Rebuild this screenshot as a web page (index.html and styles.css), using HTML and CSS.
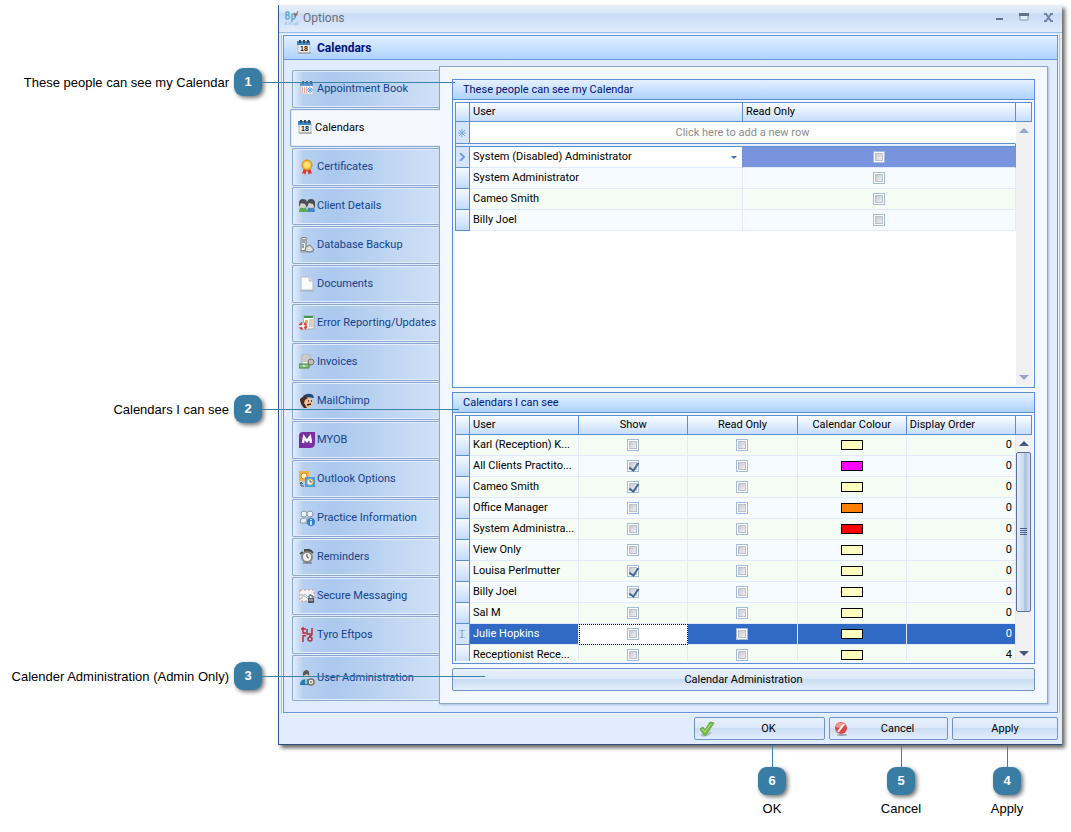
FILE: index.html
```html
<!DOCTYPE html>
<html lang="en">
<head>
<meta charset="UTF-8" />
<meta name="viewport" content="width=device-width, initial-scale=1.0" />
<title>Options - Calendars</title>
<link rel="stylesheet" href="styles.css">
</head>
<body>
<div class="page">
  <aside class="notes">
    <div class="note note-1"><span>These people can see my Calendar</span><b class="badge">1</b></div>
    <div class="note note-2"><span>Calendars I can see</span><b class="badge">2</b></div>
    <div class="note note-3"><span>Calender Administration (Admin Only)</span><b class="badge">3</b></div>
  </aside>

  <div class="window">
    <div class="titlebar">
      <svg class="logo" viewBox="0 0 16 16">
        <path d="M2 2v7M2 2h2q2 1 0 3H2M4 5q3 2 0 4H2M8 4v8M8 4h2q3 2 0 5H8" fill="none" stroke="#62abd8" stroke-width="1.500"/>
        <path d="M10 3l2 1 2-3-1 4-2 2z" fill="#8f6d63" stroke="#8f6d63" stroke-width=".5"/>
        <path d="M1 15l1-3 1 3M5 12v3M7 12v3M9 13v2M11 13h2v2h-2zM14 11v4" fill="none" stroke="#9dcbe9"/>
      </svg>
      <span class="title">Options</span>
      <button class="win-btn" aria-label="Minimize"><svg viewBox="0 0 10 10"><path d="M2 5h7v2H2z" fill="#65728a"/></svg></button>
      <button class="win-btn" aria-label="Maximize"><svg viewBox="0 0 10 10"><path d="M1 1h8v6H1z" fill="#e5effb" stroke="#8296b8"/><path d="M0 0h10v3H0z" fill="#65728a"/></svg></button>
      <button class="win-btn" aria-label="Close"><svg viewBox="0 0 10 10"><path d="M0 1h3M6 1h3M0 8h3M6 8h3M2 1l5 7M7 1L2 8" fill="none" stroke="#7486a6" stroke-width="2"/></svg></button>
    </div>

    <div class="frame">
      <div class="frame-title"><svg class="icon" viewBox="0 0 16 16"><path d="M2 3h12v10H2z" fill="#f2f2ef" stroke="#bcbcbc"/><path d="M1 1h13v4H1z" fill="#3e86c4"/><path d="M3 0h2v3H3zM7 0h2v3H7zM11 0h2v3h-2z" fill="#3a4654"/><path d="M2 13h13" stroke="#8e8e8e"/><text x="8" y="11" font-size="7" font-weight="bold" text-anchor="middle" fill="#222">18</text></svg>Calendars</div>
      <div class="frame-body">
        <nav class="tabs">
          <button class="tab"><svg class="icon" viewBox="0 0 16 16"><path d="M2 3h12v10H2z" fill="#f5f7fb" stroke="#c0c4cc"/><path d="M1 1h13v4H1z" fill="#5b98cf"/><path d="M3 0h2v3H3zM7 0h2v3H7zM11 0h2v3h-2z" fill="#5a6a7c"/><path d="M3 7h6M3 9h6M3 11h6" stroke="#e0574f" stroke-dasharray="1 1"/><path d="M11 6v6M8 9h6M9 7l4 4M13 7l-4 4" stroke="#5aaaf0"/></svg>Appointment Book</button>
          <button class="tab active"><svg class="icon" viewBox="0 0 16 16"><path d="M2 3h12v10H2z" fill="#f2f2ef" stroke="#bcbcbc"/><path d="M1 1h13v4H1z" fill="#3e86c4"/><path d="M3 0h2v3H3zM7 0h2v3H7zM11 0h2v3h-2z" fill="#3a4654"/><path d="M2 13h13" stroke="#8e8e8e"/><text x="8" y="11" font-size="7" font-weight="bold" text-anchor="middle" fill="#222">18</text></svg>Calendars</button>
          <button class="tab"><svg class="icon" viewBox="0 0 16 16"><path d="M5 9l-2 6 2-1 1 2 2-5 2 5 1-2 2 1-2-6z" fill="#e0322c"/><circle cx="8" cy="6" r="5" fill="#f6c33c" stroke="#d58a18"/><circle cx="8" cy="6" r="3" fill="#ffe27a"/></svg>Certificates</button>
          <button class="tab"><svg class="icon" viewBox="0 0 16 16"><path d="M0 14q0-5 4-5t4 5z" fill="#5faa55"/><path d="M8 14q0-5 4-5t4 5z" fill="#4689c4"/><circle cx="4" cy="7" r="3" fill="#d6d2ca"/><circle cx="12" cy="7" r="3" fill="#d6d2ca"/><path d="M0 9V5q0-4 4-4t4 4v5l-2-4-4-1zM8 9V5q0-4 4-4t4 4v6l-2-5-4-1z" fill="#4b4f55"/></svg>Client Details</button>
          <button class="tab"><svg class="icon" viewBox="0 0 16 16"><path d="M2 1l5-1v13l-5 1z" fill="#ececea" stroke="#74787c"/><path d="M3 3h3M3 5h3M3 8h2M3 10h2" stroke="#55595f"/><path d="M7 10l4-2 4 5-4 2-5-1z" fill="#dededc" stroke="#74787c"/><path d="M1 15h14" stroke="#92969a"/></svg>Database Backup</button>
          <button class="tab"><svg class="icon" viewBox="0 0 16 16"><path d="M2 1h8l4 4v9H2z" fill="#fafafa" stroke="#b8bcc2"/><path d="M10 1v4h4" fill="#e0e0e0" stroke="#b8bcc2"/><path d="M1 15h14" stroke="#a9adb3"/></svg>Documents</button>
          <button class="tab"><svg class="icon" viewBox="0 0 16 16"><path d="M4 1h11v13H5z" fill="#fafafa" stroke="#aaa"/><path d="M5 2h9" stroke="#3a9a4a" stroke-width="2"/><path d="M6 5h3v3H6z" fill="#f0b347"/><path d="M10 5h4M10 7h4M10 9h4M10 11h4" stroke="#b0a890"/><circle cx="4" cy="11" r="3" fill="#fff" stroke="#dc4038" stroke-width="2.500" stroke-dasharray="3 2"/></svg>Error Reporting/Updates</button>
          <button class="tab"><svg class="icon" viewBox="0 0 16 16"><path d="M3 1h8v11H3z" fill="#f2f2f0" stroke="#a8a8a8"/><path d="M4 3h6M4 5h6M4 7h6" stroke="#a0a0a0"/><circle cx="12" cy="8" r="3" fill="#c5b9ae" stroke="#77706c"/><path d="M0 10h10v4H0z" fill="#8cc084" stroke="#3e8440"/><circle cx="5" cy="12" r="1" fill="#eaf5e4"/></svg>Invoices</button>
          <button class="tab"><svg class="icon" viewBox="0 0 16 16"><path d="M3 5q4-4 10 1l1 5q-2 4-7 4-4-2-4-10z" fill="#f0c39a"/><path d="M1 6l5-4 3 3-3 2-1 3 3 5-3 0q-4-4-4-9z" fill="#4a2d21"/><path d="M4 3q5-4 10-1l1 3-8-1z" fill="#24486d"/><path d="M9 8h1M12 8h1M8 12l4-1" stroke="#331d16" stroke-width="1.500"/></svg>MailChimp</button>
          <button class="tab"><svg class="icon" viewBox="0 0 16 16"><path d="M0 4q0-4 4-4h12v11q0 5-5 5H0z" fill="#7c2f9e"/><path d="M4 11l1-6 3 4 3-4 1 6" fill="none" stroke="#fff" stroke-width="2.500"/></svg>MYOB</button>
          <button class="tab"><svg class="icon" viewBox="0 0 16 16"><path d="M0 0h10v10H0z" fill="#f2ae3e"/><circle cx="5" cy="5" r="3" fill="#fff3cf" stroke="#d98c1b"/><path d="M6 6h10v10H6z" fill="#4b9ee0"/><circle cx="11" cy="11" r="3" fill="#f8fbff" stroke="#e2b84d"/><path d="M11 9v2h2" stroke="#456" fill="none"/><path d="M2 12v3h3M1 13l1-2 2 2" stroke="#456" fill="none"/></svg>Outlook Options</button>
          <button class="tab"><svg class="icon" viewBox="0 0 16 16"><circle cx="5" cy="4" r="3" fill="#edf2f7" stroke="#8798a8"/><circle cx="11" cy="4" r="3" fill="#edf2f7" stroke="#8798a8"/><path d="M1 13q0-5 4-5t4 5zM7 13q0-5 4-5t3 5z" fill="#e8edf2" stroke="#8798a8"/><circle cx="12" cy="12" r="4" fill="#337fd0"/><path d="M12 9v1M12 11v4" stroke="#fff" stroke-width="1.500"/></svg>Practice Information</button>
          <button class="tab"><svg class="icon" viewBox="0 0 16 16"><path d="M1 5l3-2M11 1l3 3M6 1h4v2H6z" stroke="#4d4b49" stroke-width="2"/><circle cx="8" cy="8" r="5" fill="#f1f1ef" stroke="#888785" stroke-width="2"/><path d="M8 5v3l2 1" fill="none" stroke="#444"/><path d="M4 14h9" stroke="#666"/></svg>Reminders</button>
          <button class="tab"><svg class="icon" viewBox="0 0 16 16"><path d="M1 2h14v11H1z" fill="#f5f5f5"/><path d="M1 2h14v11H1z" fill="none" stroke="#e28b83" stroke-dasharray="2 2"/><path d="M2 11l4-5 3 3 2-3 3 5M3 11V6l6 5" fill="none" stroke="#a9bacb"/><path d="M9 10h6v5H9z" fill="#53585e"/><path d="M10 10V8q2-2 4 0v2" fill="none" stroke="#53585e"/><path d="M10 12h4" stroke="#ddd"/></svg>Secure Messaging</button>
          <button class="tab"><svg class="icon" viewBox="0 0 16 16"><path d="M4 0v6h3M2 2h5" fill="none" stroke="#d8202c" stroke-width="1.500"/><path d="M8 2v5h5M13 1v6q0 2-3 2" fill="none" stroke="#a8373f" stroke-width="1.500"/><path d="M4 15V9q1-1 3 0" fill="none" stroke="#d8202c" stroke-width="1.500"/><circle cx="11" cy="12" r="2" fill="none" stroke="#a8373f" stroke-width="1.500"/></svg>Tyro Eftpos</button>
          <button class="tab tall"><svg class="icon" viewBox="0 0 16 16"><path d="M1 15q0-6 6-6t6 6z" fill="#287eaa"/><circle cx="7" cy="5" r="3" fill="#e0d5c4"/><path d="M4 6V3q1-3 4-3 3 1 2 6l-2-2z" fill="#54585a"/><path d="M7 9v5" stroke="#fff"/><circle cx="12" cy="12" r="3" fill="#f5f1e5" stroke="#77736c" stroke-width="1.500"/><circle cx="12" cy="12" r="1" fill="#77736c"/></svg>User Administration</button>
        </nav>

        <main class="panel">
          <section class="group">
            <h2>These people can see my Calendar</h2>
            <div class="grid grid-top">
              <div class="rows">
                <table>
                  <colgroup><col class="ind-col"><col><col></colgroup>
                  <thead><tr><th></th><th>User</th><th>Read Only</th></tr></thead>
                  <tbody>
                    <tr class="new-row"><td class="ind"><svg viewBox="0 0 8 8"><path d="M4 0v8M0 4h8M1 1l6 6M7 1L1 7" stroke="#7fa8e4"/></svg></td><td colspan="2">Click here to add a new row</td></tr>
                    <tr class="split"><td colspan="3"></td></tr>
                    <tr class="current">
                      <td class="ind"><svg viewBox="0 0 8 8"><path d="M2 0l4 4-4 4" fill="none" stroke="#6f9fe2" stroke-width="2"/></svg></td>
                      <td class="combo"><select aria-label="User"><option>System (Disabled) Administrator</option><option>System Administrator</option></select></td>
                      <td class="mid"><input type="checkbox" aria-label="Read only"></td>
                    </tr>
                    <tr class="blue"><td class="ind"></td><td>System Administrator</td><td class="mid"><input type="checkbox" aria-label="Read only"></td></tr>
                    <tr><td class="ind"></td><td>Cameo Smith</td><td class="mid"><input type="checkbox" aria-label="Read only"></td></tr>
                    <tr class="blue"><td class="ind"></td><td>Billy Joel</td><td class="mid"><input type="checkbox" aria-label="Read only"></td></tr>
                  </tbody>
                </table>
              </div>
              <div class="scroll off"><i class="corner"></i><i class="up"></i><i class="track"></i><i class="down"></i></div>
            </div>
          </section>

          <section class="group">
            <h2>Calendars I can see</h2>
            <div class="grid grid-bottom">
              <div class="rows">
                <table>
                  <colgroup><col class="ind-col"><col><col><col><col><col></colgroup>
                  <thead><tr><th></th><th>User</th><th class="mid">Show</th><th class="mid">Read Only</th><th class="mid">Calendar Colour</th><th>Display Order</th></tr></thead>
                  <tbody id="calendarRows"></tbody>
                </table>
              </div>
              <div class="scroll"><i class="corner"></i><i class="up"></i><i class="track"><i class="thumb"></i></i><i class="down"></i></div>
            </div>
          </section>

          <button class="btn">Calendar Administration</button>
        </main>
      </div>
    </div>

    <div class="actions">
      <button class="btn ok"><svg class="icon" viewBox="0 0 16 16"><path d="M2 14q6 2 10-3" stroke="#aab8c4" stroke-width="2" fill="none"/><path d="M1 8l3-2 2 3 5-8 4 1-8 12H5z" fill="#79bd45" stroke="#69a948"/><path d="M3 8l3 3 6-8" fill="none" stroke="#b5e089"/></svg><span>OK</span></button>
      <button class="btn cancel"><svg class="icon" viewBox="0 0 16 16"><ellipse cx="8" cy="14" rx="5" ry="1" fill="#9ca6b2"/><circle cx="7" cy="7" r="6" fill="#dd4842"/><path d="M2 4q5-5 10 0-5 4-10 2z" fill="#f09a93"/><path d="M4 11l6-8" stroke="#fff" stroke-width="2"/></svg><span>Cancel</span></button>
      <button class="btn apply">Apply</button>
    </div>
  </div>
</div>

<div class="bottom-notes">
  <div class="note-down"><b class="badge">6</b><span>OK</span></div>
  <div class="note-down"><b class="badge">5</b><span>Cancel</span></div>
  <div class="note-down"><b class="badge">4</b><span>Apply</span></div>
</div>

<script>
  // name, show, colour, display order
  const calendars = [
    ['Karl (Reception) K...', false, 'cream', 0],
    ['All Clients Practito...', true, 'magenta', 0],
    ['Cameo Smith', true, 'cream', 0],
    ['Office Manager', false, 'orange', 0],
    ['System Administra...', false, 'red', 0],
    ['View Only', false, 'cream', 0],
    ['Louisa Perlmutter', true, 'cream', 0],
    ['Billy Joel', true, 'cream', 0],
    ['Sal M', false, 'cream', 0],
    ['Julie Hopkins', false, 'cream', 0],
    ['Receptionist Rece...', false, 'cream', 4]
  ];
  const cursor = '<svg viewBox="0 0 8 8"><path d="M1 0h2l1 1 1-1h2M4 1v6M1 8h2l1-1 1 1h2" fill="none" stroke="#6f9fe2"/></svg>';
  const body = document.getElementById('calendarRows');

  calendars.forEach(function(c, i) {
    const row = document.createElement('tr');
    const selected = c[0] === 'Julie Hopkins';
    if (selected) {
      row.className = 'selected';
    } else if (i % 2) {
      row.className = 'blue';
    }
    row.innerHTML =
      '<td class="ind">' + (selected ? cursor : '') + '</td>' +
      '<td>' + c[0] + '</td>' +
      '<td class="mid' + (selected ? ' focus' : '') + '"><input type="checkbox" aria-label="Show"' + (c[1] ? ' checked' : '') + '></td>' +
      '<td class="mid"><input type="checkbox" aria-label="Read only"></td>' +
      '<td class="mid"><span class="swatch ' + c[2] + '"></span></td>' +
      '<td class="num">' + c[3] + '</td>';
    body.appendChild(row);
  });
</script>
</body>
</html>
```
FILE: styles.css
```css
* {
  box-sizing: border-box;
}
body {
  margin: 0;
  background: #fff;
  color: #000;
  font: 11px/14px Roboto, Tahoma, sans-serif;
}
button, select, input {
  font: inherit;
  color: inherit;
  margin: 0;
}
svg {
  display: block;
}
.icon {
  width: 16px;
  height: 16px;
  flex: none;
}

/* numbered notes */
.page {
  display: flex;
  padding: 5px 9px 0 0;
}
.notes {
  flex: none;
  width: 278px;
  padding: 63px 16px 0 0;
}
.note {
  display: flex;
  align-items: center;
  justify-content: flex-end;
  gap: 5px;
  position: relative;
  font: 13px/16px "Liberation Sans", Arial, sans-serif;
}
.note span {
  padding-top: 2px;
}
.note-2 {
  margin-top: 299px;
}
.note-3 {
  margin-top: 239px;
}
.note::after {
  content: "";
  position: absolute;
  z-index: 2;
  left: 100%;
  top: 14px;
  width: 193px;
  height: 1px;
  background: #3b82a8;
}
.note-2::after {
  width: 197px;
}
.note-3::after {
  width: 223px;
}
.badge {
  display: flex;
  align-items: center;
  justify-content: center;
  width: 28px;
  height: 28px;
  border-radius: 9px;
  background: #397da5;
  color: #fff;
  font: bold 13px/16px "Liberation Sans", Arial, sans-serif;
  box-shadow: 2px 2px 4px rgba(0,0,0,0.55);
}
.bottom-notes {
  display: flex;
  justify-content: flex-end;
  padding: 22px 34px 0 0;
}
.note-down {
  display: flex;
  flex-direction: column;
  align-items: center;
  gap: 6px;
  width: 60px;
  position: relative;
  font: 13px/16px "Liberation Sans", Arial, sans-serif;
}
.note-down:nth-child(1) {
  margin-right: 69px;
}
.note-down:nth-child(2) {
  margin-right: 46px;
}
.note-down::before {
  content: "";
  position: absolute;
  bottom: 100%;
  left: 50%;
  width: 1px;
  height: 22px;
  background: #3b82a8;
}

/* window */
.window {
  flex: 1;
  min-width: 0;
  background: #e1edff;
  border-left: 1px solid #2e5c98;
  border-bottom: 1px solid #2e4f7c;
  box-shadow: 3px 3px 4px rgba(0,0,0,0.6);
}
.titlebar {
  display: flex;
  align-items: center;
  height: 28px;
  padding: 0 8px 2px 5px;
  border-bottom: 1px solid #94bdf0;
  background: linear-gradient(#e9f0f9, #d8e6f7 30%, #c8dbf5 34%, #e0ecfb);
}
.logo {
  width: 16px;
  height: 16px;
}
.title {
  flex: 1;
  padding-left: 3px;
  font-size: 12px;
  color: #68707c;
}
.win-btn {
  width: 10px;
  height: 10px;
  margin-left: 15px;
  padding: 0;
  border: 0;
  background: none;
}
.win-btn svg {
  width: 10px;
  height: 10px;
}
.frame {
  margin: 2px 4px 0;
  border: 1px solid #6695d6;
  background: #e1edff;
  box-shadow: 0 0 0 1px #eef5ff, -2px 0 0 0 #a4c7f2, 2px 0 0 0 #a4c7f2;
}
.frame-title {
  display: flex;
  align-items: center;
  gap: 5px;
  height: 24px;
  padding-left: 12px;
  border-bottom: 1px solid #6695d6;
  background: linear-gradient(#e3f0ff, #aed2ff);
  color: #00147a;
  font-size: 12px;
  font-weight: bold;
}
.icon text {
  font-family: "Liberation Sans", Arial, sans-serif;
}
.frame-body {
  display: flex;
  padding: 6px 9px 8px 8px;
}

/* tabs */
.tabs {
  flex: none;
  width: 147px;
  padding-top: 4px;
  display: flex;
  flex-direction: column;
  gap: 1px;
}
.tab {
  display: flex;
  align-items: center;
  gap: 2px;
  height: 38px;
  padding: 0 0 0 6px;
  border: 1px solid #8ca6d2;
  border-right: 0;
  border-radius: 2px 0 0 2px;
  background: linear-gradient(90deg, #e2edfb, #b7d0f1 10px, #abc8ee 40px, #d0e1f7);
  box-shadow: inset 1px 1px 0 #e3edfb, inset 0 -1px 0 #e3edfb;
  color: #15428b;
  text-align: left;
  white-space: nowrap;
}
.tab.active {
  margin: 0 -1px 0 -2px;
  background: #f5f9ff;
  color: #000;
  position: relative;
  z-index: 1;
}
.tab.tall {
  height: 46px;
}
.panel {
  flex: 1;
  min-width: 0;
  display: flex;
  flex-direction: column;
  gap: 4px;
  padding: 12px;
  border: 1px solid #8ca6d2;
  background: #f3f7ff;
  box-shadow: 1px 1px 2px #a9bfe0;
}

/* groups */
.group {
  border: 1px solid #5c8fd2;
  background: #f1f7ff;
}
.group h2 {
  height: 20px;
  margin: 0;
  padding: 3px 10px;
  border-bottom: 1px solid #5c8fd2;
  background: linear-gradient(#e6f1ff, #aed2ff);
  color: #00147a;
  font-size: 11px;
  font-weight: normal;
}
.grid {
  display: flex;
  margin: 2px;
  background: #fff;
}
.grid-top {
  height: 283px;
}
.grid-bottom {
  height: 246px;
}
.rows {
  flex: 1;
  min-width: 0;
  overflow: hidden;
}
table {
  width: 100%;
  table-layout: fixed;
  border-collapse: separate;
  border-spacing: 0;
  border-left: 1px solid #5c8fd2;
}
.ind-col {
  width: 14px;
}
th {
  height: 20px;
  padding: 0 3px;
  border: 1px solid #5c8fd2;
  border-left: 0;
  background: linear-gradient(#fafdff, #c6ddfd);
  font-weight: normal;
  text-align: left;
  white-space: nowrap;
}
td {
  height: 21px;
  padding: 0 3px;
  border-right: 1px solid #e0eafc;
  border-bottom: 1px solid #e0eafc;
  background: #f4fcf3;
  white-space: nowrap;
}
.blue td {
  background: #f5fbff;
}
td.ind, .blue td.ind {
  padding: 0 2px;
  border-color: #5c8fd2;
  background: linear-gradient(#f5f9ff, #c3dafc);
}
.ind svg {
  width: 8px;
  height: 8px;
}
.mid {
  text-align: center;
}
.num {
  text-align: right;
}
.new-row td {
  height: 22px;
  border-color: #5c8fd2;
  border-right-color: #fff;
  background: #fff;
  color: #8b8b8b;
  text-align: center;
}
.new-row td.ind {
  border-right-color: #5c8fd2;
  background: #d5e5fd;
}
.split td {
  height: 3px;
  border-color: #5c8fd2;
  background: #e6f0ff;
}
.current td {
  background: #7894dc;
  border-right-color: #7894dc;
}
.current td.combo {
  position: relative;
  padding: 0;
  background: #fff;
}
.combo select {
  appearance: none;
  display: block;
  width: 100%;
  height: 20px;
  padding: 0 3px;
  border: 0;
  background: #fff;
}
.combo::after {
  content: "";
  position: absolute;
  right: 5px;
  top: 9px;
  border: 3px solid transparent;
  border-top-color: #3c6fb0;
  border-bottom: 0;
  pointer-events: none;
}
.current td.ind {
  background: #d5e5fd;
  border-color: #5c8fd2;
}
.selected td {
  background: #316ac5;
  color: #fff;
}
.selected td.ind {
  background: #d5e5fd;
}
.selected td.focus {
  background: #fff;
  outline: 1px dotted #000;
  outline-offset: -1px;
}
input[type="checkbox"] {
  appearance: none;
  display: block;
  width: 12px;
  height: 12px;
  margin: 0 auto;
  position: relative;
  border: 1px solid #a5bbdc;
  background: linear-gradient(135deg, #b9bfca, #fafafa);
  box-shadow: inset 0 0 0 1px #fff, inset 0 0 0 2px #bcc1cb;
}
input[type="checkbox"]:checked::after {
  content: "";
  position: absolute;
  left: 3px;
  top: 0;
  width: 4px;
  height: 8px;
  border: solid #47699c;
  border-width: 0 2px 2px 0;
  transform: rotate(35deg);
}
.swatch {
  display: block;
  width: 22px;
  height: 10px;
  margin: 0 auto;
  border: 1px solid #000;
}
.cream { background: #ffffc0; }
.magenta { background: #ff00ff; }
.orange { background: #ff8000; }
.red { background: #ff0000; }

/* scrollbars */
.scroll {
  flex: none;
  display: flex;
  flex-direction: column;
  align-items: center;
  width: 16px;
  background: #f0f0f2;
}
.corner {
  width: 100%;
  height: 20px;
  border: 1px solid #5c8fd2;
  border-left: 0;
  background: linear-gradient(#fafdff, #c6ddfd);
}
.up, .down {
  border: 5px solid transparent;
}
.up {
  margin: 6px 0;
  border-top: 0;
  border-bottom-color: #45577f;
}
.down {
  margin: 4px 0 5px;
  border-bottom: 0;
  border-top-color: #45577f;
}
.off .up {
  border-bottom-color: #97a4c8;
}
.off .down {
  border-top-color: #97a4c8;
}
.track {
  flex: 1;
  width: 100%;
}
.thumb {
  display: flex;
  align-items: center;
  justify-content: center;
  width: 15px;
  height: 82%;
  border: 1px solid #5a6f9e;
  border-radius: 2px;
  background: linear-gradient(90deg, #e9eff8, #c9d8eb 50%, #a9bfdc 60%, #d8e3f2);
}
.thumb::after {
  content: "";
  width: 7px;
  height: 7px;
  background: repeating-linear-gradient(#4a5f88 0 1px, transparent 1px 2px);
}

/* buttons */
.btn {
  display: flex;
  align-items: center;
  justify-content: center;
  height: 23px;
  padding: 0 4px;
  border: 1px solid #7294c8;
  border-radius: 2px;
  background: linear-gradient(#e8f1fc, #dde9f8 45%, #cbddf2 50%, #e3eefb);
  color: #000;
}
.btn span {
  flex: 1;
  padding-left: 2px;
}
.actions {
  display: flex;
  justify-content: flex-end;
  gap: 4px;
  padding: 4px;
}
.ok {
  width: 131px;
}
.cancel {
  width: 119px;
}
.apply {
  width: 106px;
}
```
